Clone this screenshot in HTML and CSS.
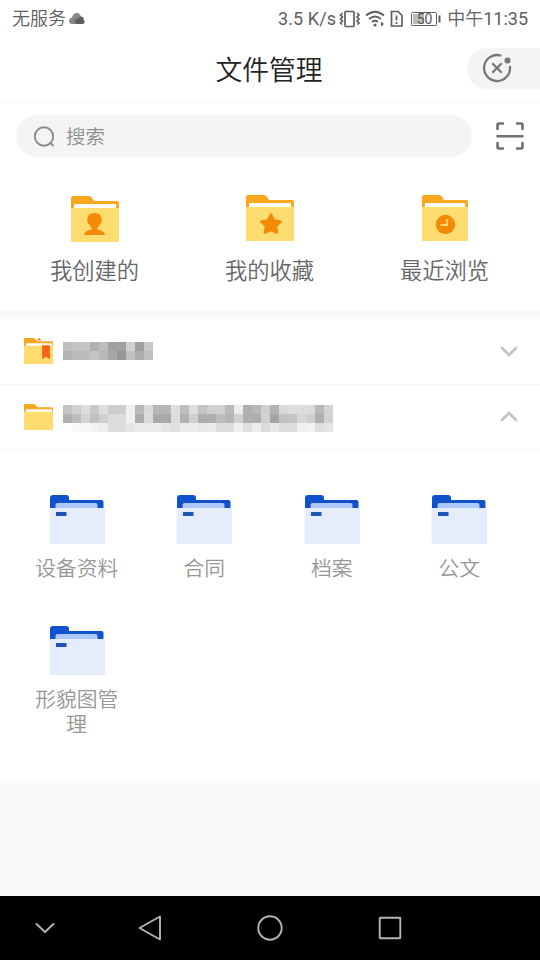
FILE: index.html
```html
<!DOCTYPE html>
<html lang="zh-CN">
<head>
<meta charset="utf-8">
<title>文件管理</title>
<link rel="stylesheet" href="styles.css">
</head>
<body>
<svg width="0" height="0" class="defs">
  <symbol id="yellow" viewBox="0 0 48 47">
    <path fill="#faa61e" d="M0 14V2Q0 0 2 0H18Q20 0 21 2L23 5H46Q48 5 48 7V14Z"/>
    <path fill="#fff" d="M3 14V9Q3 8 4 8H44Q45 8 45 9V14Z"/>
    <path fill="#ffdc70" d="M0 12H48V44.500Q48 46 46.500 46H1.500Q0 46 0 44.500Z"/>
  </symbol>
  <symbol id="small" viewBox="0 0 28 25">
    <path fill="#faa61e" d="M0 9V1Q0 0 1 0H10L13 3H27Q28 3 28 4V9Z"/>
    <path fill="#fff" d="M2 9V5H27V9Z"/>
    <path fill="#ffdc70" d="M0 6Q0 7.500 2 7.500H28V24Q28 25 27 25H1Q0 25 0 24Z"/>
  </symbol>
  <symbol id="blue" viewBox="0 0 56 50">
    <path fill="#1052cc" d="M1 14V3Q1 0 4 0H17Q20 0 20 3V5H52.500Q54.500 5 54.500 7V14Z"/>
    <path fill="#adc8fb" d="M6.500 14V10Q6.500 8 8.500 8H46.500Q48.500 8 48.500 10V14Z"/>
    <path fill="#e5edfd" d="M.5 13H56V48Q56 49 55 49H1.500Q.5 49 .5 48Z"/>
    <path fill="#1c55b8" d="M7 17H17.500V21H7Z"/>
  </symbol>
</svg>
<div class="status">
  <span class="carrier">无服务</span>
  <svg class="cloud" width="16" height="12" viewBox="0 0 16 12"><path fill="#888" d="M3 11Q0 10.500 0 8 0 5 3 4.500 4 0 8 0 11 0 12 4L8 11Z"/><path fill="#5e5e5e" d="M8 11Q5.500 10 6 7.500 7 5.500 9 5.500 10 3 12.500 3.500 15 4 14.500 6.500 16 7.500 15.500 9.500 15 11 13 11Z"/></svg>
  <span class="speed">3.5 K/s</span>
  <svg class="indicators" width="104" height="20" viewBox="0 0 104 20" fill="none" stroke="#5f5f5f" stroke-width="1.700">
    <rect x="6" y="2.500" width="9" height="15" rx="1"/>
    <path d="M3.500 4L1.500 6 3.500 8 1.500 10 3.500 12 1.500 14 3 15.500M18 4L20 6 18 8 20 10 18 12 20 14 18.500 15.500"/>
    <path d="M27 6.500Q36-1 45 6.500M30 10Q36 5 42 10M33 13Q36 10.500 39 13"/>
    <circle cx="36" cy="16" r="1.500" fill="#5f5f5f" stroke="none"/><path fill="#5f5f5f" stroke="none" d="M42 12.500L45 15 42 17.500Z"/>
    <path d="M52.500 2.500H59L63 6.500V17H52.500Z"/><path d="M57.500 6.500V11.500M57.500 13V15"/>
    <rect x="72.500" y="3.500" width="25" height="13" rx="1" stroke-width="1"/><path fill="#bbb" stroke="none" d="M74 5H85V15H74Z"/><path d="M100.500 6.500V13.500" stroke-width="2"/>
    <text class="battery" x="85.500" y="14.800" text-anchor="middle">50</text>
  </svg>
  <span class="time">中午<span class="digits">11:35</span></span>
</div>
<header class="header">
  <h1>文件管理</h1>
  <div class="capsule"><svg width="30" height="30" viewBox="0 0 30 30" fill="none" stroke="#777" stroke-width="2.300" stroke-linecap="round"><path d="M18.500 2.500A13 13 0 1 0 28 14M11 11L19 19M19 11L11 19"/><circle cx="25.500" cy="7.500" r="3" fill="#777" stroke="none"/></svg></div>
</header>
<div class="searchbar">
  <div class="field"><svg width="22" height="22" viewBox="0 0 22 22" fill="none" stroke="#8b8b8b" stroke-width="1.900" stroke-linecap="round"><circle cx="11" cy="11.500" r="9.200"/><path d="M17.500 18L20 20.500"/></svg><span>搜索</span></div>
  <svg class="scan" width="28" height="28" viewBox="0 0 28 28" fill="none" stroke="#707070" stroke-width="2.600" stroke-linecap="round" stroke-linejoin="round"><path d="M1.500 7V3Q1.500 1.500 3 1.500H7M21 1.500H25Q26.500 1.500 26.500 3V7M1.500 21V25Q1.500 26.500 3 26.500H7M21 26.500H25Q26.500 26.500 26.500 25V21M1.500 14.200H26.500"/></svg>
</div>
<div class="quick">
  <div class="entry first"><svg width="48" height="47" viewBox="0 0 48 47"><use href="#yellow" width="48" height="47"/><path fill="#f58a04" d="M23.500 17Q30.500 17 30.500 23 31.500 26 29 28 27.500 31 26 32V33Q33.500 35 34 39H13Q13.500 35 21 33V32Q19.500 31 18 28 15.500 26 16.500 23 16.500 17 23.500 17Z"/></svg><span>我创建的</span></div>
  <div class="entry"><svg width="48" height="47" viewBox="0 0 48 47"><use href="#yellow" width="48" height="47"/><path fill="#f58a04" stroke="#f58a04" stroke-width="2.500" stroke-linejoin="round" d="M25 19.500L28 25.500 34.500 26.500 30 31 31 37.500 25 35 19 37.500 20 31 15.500 26.500 22 25.500Z"/></svg><span>我的收藏</span></div>
  <div class="entry"><svg width="46" height="47" viewBox="0 0 46 47"><g transform="scale(.958 1)"><use href="#yellow" width="48" height="47"/></g><circle cx="23.500" cy="29.500" r="9.700" fill="#f58a04"/><path d="M25 24V30H18.500" fill="none" stroke="#ffdc70" stroke-width="1.800"/></svg><span>最近浏览</span></div>
</div>
<div class="row upper">
  <svg width="29" height="26" viewBox="0 0 28 25"><use href="#small" width="28" height="25"/><path fill="#fa6316" d="M17.500 7H25V20.500L21.300 18 17.500 20.500ZM13 2L14 0 17 2Z"/></svg>
  <div class="mosaic" data-tones="c0 c4 c4 b0 bc a0 a0 d0 a0 c8|b4 bc bc c4 b8 a8 98 c0 ac c0"></div>
  <svg class="chevron" width="18" height="12" viewBox="0 0 18 12"><path d="M2 2L9 9 16 2"/></svg>
</div>
<div class="row lower">
  <svg width="29" height="26" viewBox="0 0 28 25"><use href="#small" width="28" height="25"/></svg>
  <div class="mosaic" data-tones="c4 d0 dd c8 de ce ce f0 b9 d9 b6 b6 df bd df c4 d0 d0 b9 ed b1 b8 cf b2 da dd dd dc b8 d2|b0 bc d4 c0 d0 dc dc f0 ad dc a9 a9 de b2 d0 ae ae bd b6 cf af af d0 a5 c2 c4 d8 cf b0 d3|fd fa f6 f3 ee dc dc e5 eb ea eb e5 e0 eb ed e8 eb dc de f0 df ee dc e8 dc dc ef f2 df e5"></div>
  <svg class="chevron" width="18" height="12" viewBox="0 0 18 12"><path d="M2 9L9 2 16 9"/></svg>
</div>
<div class="folders">
  <div class="folder"><svg width="56" height="50"><use href="#blue"/></svg><span>设备资料</span></div>
  <div class="folder"><svg width="56" height="50"><use href="#blue"/></svg><span>合同</span></div>
  <div class="folder"><svg width="56" height="50"><use href="#blue"/></svg><span>档案</span></div>
  <div class="folder"><svg width="56" height="50"><use href="#blue"/></svg><span>公文</span></div>
  <div class="folder"><svg width="56" height="50"><use href="#blue"/></svg><span>形貌图管理</span></div>
</div>
<nav class="nav">
  <svg class="hide" viewBox="0 0 30 30"><path d="M6.500 11L15 19 23.500 11"/></svg>
  <svg viewBox="0 0 30 30"><path d="M25 3.500V26.500L4.500 15Z"/></svg>
  <svg viewBox="0 0 30 30"><circle cx="15" cy="15" r="11.700"/></svg>
  <svg viewBox="0 0 30 30"><rect x="4.700" y="4.700" width="20.600" height="20.600" rx=".5"/></svg>
</nav>
<script src="mosaic.js"></script>
</body>
</html>
```
FILE: styles.css
```css
* { box-sizing: border-box; }
body {
  margin: 0;
  width: 540px;
  height: 960px;
  overflow: hidden;
  display: flex;
  flex-direction: column;
  background: #fafafa;
  color: #666;
  font-family: Roboto, "Noto Sans CJK SC", sans-serif;
  font-weight: 350;
}
svg { display: block; flex: none; }
.defs { position: absolute; }
.status {
  height: 38px;
  flex: none;
  display: flex;
  align-items: center;
  padding: 0 12px;
  background: #fff;
  font-size: 18px;
  line-height: 36px;
  white-space: nowrap;
  color: #606060;
}
.cloud { margin-left: 3px; }
.speed { margin-left: auto; font-weight: 400; letter-spacing: .1px; }
.indicators { margin: 0 4px 0 3px; }
.digits { font-weight: 400; }
.battery { font: 400 14px Roboto, sans-serif; fill: #555; stroke: none; }
.header {
  height: 65px;
  flex: none;
  display: grid;
  grid-template-columns: 74px 1fr 74px;
  align-items: center;
  border-bottom: 1px solid #f8f8f8;
  background: #fff;
}
h1 {
  grid-column: 2;
  margin: 0 1px 0 -1px;
  padding-top: 1px;
  text-align: center;
  font-size: 26.800px;
  line-height: 40px;
  font-weight: 350;
  color: #222;
}
.capsule {
  height: 41px;
  margin: 0 -1px 3px 1px;
  padding: 5px 15px;
  border-radius: 21px 0 0 21px;
  background: #f4f4f4;
}
.searchbar {
  height: 67px;
  flex: none;
  display: flex;
  align-items: center;
  justify-content: space-between;
  padding: 0 16px 2px;
  background: #fff;
}
.field {
  width: 456px;
  height: 42px;
  display: flex;
  align-items: center;
  gap: 11px;
  padding-left: 17px;
  border-radius: 21px;
  background: #f4f4f4;
  font-size: 19.500px;
  color: #8f8f8f;
}
.quick {
  height: 149px;
  flex: none;
  display: grid;
  grid-template-columns: repeat(3, 175px);
  padding: 25px 8px 0 7px;
  border-bottom: 9px solid #f9f9f9;
  background: #fff;
}
.entry {
  display: flex;
  flex-direction: column;
  align-items: center;
  gap: 12px;
  font-size: 22.300px;
  line-height: 34px;
  color: #666;
}
.entry.first svg { margin-top: 1px; margin-bottom: -1px; }
.row {
  height: 65px;
  flex: none;
  display: flex;
  align-items: center;
  padding: 0 22px 0 24px;
  border-bottom: 1px solid #f8f8f8;
  background: #fff;
}
.upper { height: 66px; padding-bottom: 1px; }
.upper .chevron { margin-top: 2px; }
.lower .mosaic { margin-top: 2px; }
.mosaic {
  display: grid;
  grid-auto-rows: 9px;
  margin-left: 10px;
}
.chevron {
  margin-left: auto;
  fill: none;
  stroke: #c4c4c4;
  stroke-width: 2.800;
  stroke-linecap: round;
}
.folders {
  height: 331px;
  flex: none;
  display: grid;
  grid-template-columns: repeat(4, 127.500px);
  grid-auto-rows: 131px;
  padding: 45px 13px 0;
  background: #fff;
}
.folder {
  display: flex;
  flex-direction: column;
  align-items: center;
  gap: 12px;
  font-size: 20.800px;
  line-height: 25px;
  color: #969696;
}
.folder span { width: 88px; text-align: center; }
.nav {
  height: 64px;
  flex: none;
  display: flex;
  gap: 90px;
  margin-top: auto;
  padding: 17px 30px;
  background: #000;
}
.nav svg {
  width: 30px;
  height: 30px;
  fill: none;
  stroke: #b5b5b5;
  stroke-width: 1.900;
  stroke-linejoin: round;
  stroke-linecap: round;
}
.nav .hide { margin-right: -15px; }
```
FILE: mosaic.js
```js
// Builds each redacted label from rows of grey tones.
document.querySelectorAll('.mosaic').forEach(function (label) {
  var rows = label.dataset.tones.split('|').map(function (r) { return r.split(' '); });
  label.style.gridTemplateColumns = 'repeat(' + rows[0].length + ', 9px)';
  rows.flat().forEach(function (tone) {
    var cell = document.createElement('i');
    cell.style.background = '#' + tone + tone + tone;
    label.appendChild(cell);
  });
});
```
